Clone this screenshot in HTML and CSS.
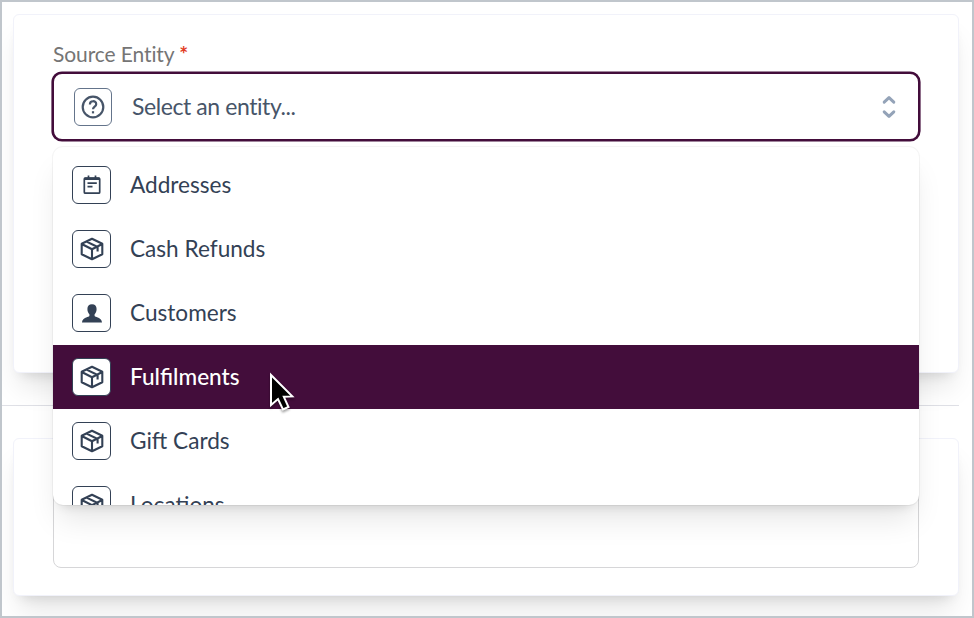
FILE: index.html
```
<!DOCTYPE html>
<html lang="en">

<head>
    <meta charset="UTF-8">
    <meta name="viewport" content="width=device-width, initial-scale=1.0">
    <title>Source Entity</title>
    <link rel="stylesheet" href="styles.css">
</head>

<body>
    <!-- Shared icons -->
    <svg class="sprite" aria-hidden="true">
        <symbol id="icon-box" viewBox="0 0 24 24">
            <path d="M12 1.7 L22.3 6.8 V17.2 L12 22.3 L1.7 17.2 V6.8 Z M2.2 7.2 L12 12.2 L21.8 7.2 M12 12.2 V22 M6.6 4.6 L17.6 10 V14.6" fill="none" stroke="currentColor" stroke-width="2.1" stroke-linejoin="round" />
        </symbol>
    </svg>

    <div class="page">
        <!-- Source card -->
        <div class="card card-source">
            <label class="field-label">Source Entity <span class="required">*</span></label>
            <div class="select">
                <button type="button" class="select-btn">
                    <span class="icon icon-muted">
                        <svg width="24" height="24" viewBox="0 0 24 24" fill="none" stroke="currentColor" stroke-width="2.2">
                            <circle cx="12" cy="12" r="10.3" />
                            <path d="M8.9 9.4 C8.9 5.2 15.2 5.2 15.2 9.2 C15.2 11.6 12 11.8 12 14.3" />
                            <path d="M12 16.2 V18.4" />
                        </svg>
                    </span>
                    <span class="select-text">Select an entity...</span>
                    <svg class="chevrons" width="14" height="24" viewBox="0 0 14 24" fill="none" stroke="currentColor" stroke-width="3" stroke-linecap="round" stroke-linejoin="round">
                        <path d="M2.2 7.2 L7 2.6 L11.8 7.2 M2.2 16.8 L7 21.4 L11.8 16.8" />
                    </svg>
                </button>

                <!-- Dropdown -->
                <ul class="options">
                    <li class="option">
                        <span class="icon">
                            <svg width="24" height="24" viewBox="0 0 24 24" fill="none" stroke="currentColor" stroke-width="1.7">
                                <rect x="4.3" y="5" width="15.4" height="15.2" rx="1" />
                                <path d="M4.5 5.7 H19.5" stroke-width="2.4" />
                                <path d="M8.5 2.5 V5 M15.5 2.5 V5 M7.5 10.1 H16.8 M7.5 13.6 H12.5" />
                            </svg>
                        </span>
                        <span class="option-text">Addresses</span>
                    </li>
                    <li class="option">
                        <span class="icon"><svg width="24" height="24"><use href="#icon-box" /></svg></span>
                        <span class="option-text">Cash Refunds</span>
                    </li>
                    <li class="option">
                        <span class="icon">
                            <svg width="24" height="24" viewBox="0 0 24 24" fill="currentColor">
                                <path d="M12 3.2 C15 3.2 16.6 5 16.6 8 C16.6 10.3 15.8 12.2 14.6 13.3 V15 C15.2 16.2 21.8 16.3 22 21.6 H2 C2.2 16.3 8.8 16.2 9.4 15 V13.3 C8.2 12.2 7.4 10.3 7.4 8 C7.4 5 9 3.2 12 3.2 Z" />
                            </svg>
                        </span>
                        <span class="option-text">Customers</span>
                    </li>
                    <li class="option active">
                        <span class="icon"><svg width="24" height="24"><use href="#icon-box" /></svg></span>
                        <span class="option-text">Fulfilments</span>
                    </li>
                    <li class="option">
                        <span class="icon"><svg width="24" height="24"><use href="#icon-box" /></svg></span>
                        <span class="option-text">Gift Cards</span>
                    </li>
                    <li class="option">
                        <span class="icon"><svg width="24" height="24"><use href="#icon-box" /></svg></span>
                        <span class="option-text">Locations</span>
                    </li>
                </ul>
            </div>
        </div>

        <hr class="divider">

        <!-- Second card -->
        <div class="card card-target">
            <div class="empty-field"></div>
        </div>
    </div>

    <!-- Mouse pointer -->
    <svg class="pointer" width="32" height="42" viewBox="0 0 32 42">
        <path d="M5 3 V33 L12 27 L17 37.5 L22.5 35 L17.8 24.8 L26.3 24.4 Z" fill="#000" stroke="#fff" stroke-width="2" />
    </svg>
</body>

</html>
```

FILE: styles.css
```
* {
    box-sizing: border-box;
}

body {
    margin: 0;
    height: 618px;
    overflow: hidden;
    font-family: Lato, "Open Sans", sans-serif;
    color: #334155;
    background-color: #ffffff;
}

.sprite {
    display: none;
}

.page {
    height: 618px;
    padding: 12px 13px 0 11px;
    border: 2px solid #c0c6cc;
    overflow: hidden;
}

/* Cards */
.card {
    padding: 27px 39px;
    background-color: #ffffff;
    border: 1px solid #f1f2fa;
    border-radius: 6px;
    box-shadow: 0 20px 26px -6px rgba(0, 0, 0, 0.1), 0 8px 12px -8px rgba(0, 0, 0, 0.14);
}

.card-source {
    position: relative;
    z-index: 1;
    height: 359px;
}

.card-target {
    display: flex;
    height: 158px;
}

.divider {
    height: 1px;
    margin: 32px 0 32px -11px;
    border: none;
    background-color: #dfe0e6;
}

.empty-field {
    flex: 1;
    border: 1px solid #d6d6d8;
    border-radius: 8px;
}

/* Select */
.field-label {
    display: block;
    height: 30px;
    line-height: 24px;
    font-size: 21px;
    letter-spacing: -0.1px;
    color: #757575;
}

.required {
    font-weight: bold;
    color: #e23b24;
}

.select {
    position: relative;
}

.select-btn {
    display: flex;
    align-items: center;
    width: calc(100% + 2px);
    height: 69px;
    margin: 0 -1px;
    padding: 0 22px 0 20px;
    font-family: inherit;
    font-size: 23px;
    text-align: left;
    color: #475569;
    background-color: #ffffff;
    border: 2px solid #430d3b;
    border-radius: 10px;
    box-shadow: 0 0 0 0.6px #430d3b;
}

.select-text {
    flex: 1;
    padding-bottom: 1px;
    letter-spacing: -0.42px;
}

.chevrons {
    color: #94a3b8;
}

.icon {
    display: flex;
    align-items: center;
    justify-content: center;
    flex: none;
    width: 39px;
    height: 38px;
    margin-right: 19px;
    color: #334155;
    background-color: #ffffff;
    border: 1px solid #334155;
    border-radius: 6px;
}

.icon-muted {
    width: 38px;
    margin-right: 20px;
    color: #475569;
    border-color: #64748b;
}

/* Dropdown list */
.options {
    position: absolute;
    top: 75px;
    left: 0;
    width: 100%;
    height: 358px;
    margin: 0;
    padding: 6px 0;
    overflow: hidden;
    list-style: none;
    background-color: #ffffff;
    border-radius: 10px;
    box-shadow: 0 0 0 1px rgba(0, 0, 0, 0.04), 0 20px 30px -6px rgba(0, 0, 0, 0.1), 0 8px 12px -8px rgba(0, 0, 0, 0.16);
}

.option {
    display: flex;
    align-items: center;
    height: 64px;
    padding: 0 19px;
    font-size: 22.6px;
}

.option-text {
    padding-bottom: 2px;
}

.option.active {
    font-weight: 500;
    color: #ffffff;
    background-color: #430d3b;
}

.pointer {
    position: absolute;
    top: 372px;
    left: 266px;
    z-index: 2;
    filter: drop-shadow(0 2px 1px rgba(0, 0, 0, 0.35));
}
```
